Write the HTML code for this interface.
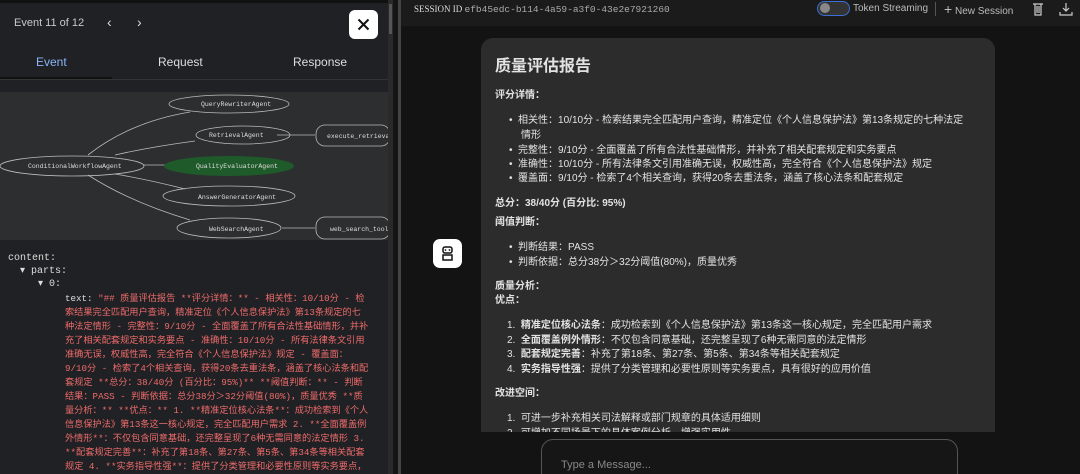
<!DOCTYPE html><html><head><meta charset="utf-8"><style>
*{margin:0;padding:0;box-sizing:border-box}
html{width:1080px;height:474px;overflow:hidden}
body{width:1080px;height:474px;overflow:hidden;background:#131313;font-family:"Liberation Sans","Noto Sans CJK SC",sans-serif;position:relative;color:#e3e3e3}
.abs{position:absolute}
#left{left:0;top:0;width:393px;height:474px;background:#202124;overflow:hidden}
.mono{font-family:"Liberation Mono","Noto Sans CJK SC",monospace}
.card{left:481px;top:38px;width:514px;height:394px;background:#2c2c2c;border-radius:12px 12px 0 0;overflow:hidden;font-size:10px;color:#e3e3e3}
.card .l{position:absolute;white-space:nowrap}
.b{font-weight:bold}
.jt{font-size:9.2px;color:#ee6b6b;line-height:14px;white-space:nowrap}
</style></head><body>
<div id="left" class="abs">
 <div class="abs" style="left:0;top:0;width:393px;height:3px;background:#111"></div>
 <div class="abs" style="left:14px;top:17px;font-size:11px;color:#c8c8c8">Event 11 of 12</div>
 <div class="abs" style="left:107px;top:14px;font-size:14px;color:#ddd">&#8249;</div>
 <div class="abs" style="left:137px;top:14px;font-size:14px;color:#ddd">&#8250;</div>
 <div class="abs" style="left:349px;top:10px;width:29px;height:29px;background:#fff;border-radius:6px"><svg width="29" height="29"><path d="M9.5 9.5L19.5 19.5M19.5 9.5L9.5 19.5" stroke="#111" stroke-width="2"/></svg></div>
 <div class="abs" style="left:36px;top:55px;font-size:12px;color:#8ab4f8">Event</div>
 <div class="abs" style="left:158px;top:55px;font-size:12px;color:#ddd">Request</div>
 <div class="abs" style="left:293px;top:55px;font-size:12px;color:#ddd">Response</div>
 <div class="abs" style="left:0;top:77px;width:112px;height:2px;background:#111"></div>
 <div class="abs" style="left:0;top:79px;width:393px;height:1px;background:#333"></div>
 <div class="abs" style="left:0;top:92px;width:393px;height:148px;background:#2d2e30"></div>
 <svg class="abs" style="left:0;top:92px" width="393" height="148">
  <g stroke="#bbb" stroke-width="0.8" fill="none">
   <path d="M88 63Q130 30 190 20M115 63Q150 55 195 49M143 73L165 73M115 82Q150 88 185 97M88 83Q130 110 190 128M277 43L315 43M282 136L315 136"/>
   <ellipse cx="229" cy="12" rx="60" ry="9"/><ellipse cx="243" cy="43" rx="47" ry="9"/><ellipse cx="72" cy="74" rx="72" ry="10"/>
   <ellipse cx="229" cy="104" rx="66" ry="10"/><ellipse cx="229" cy="136" rx="52" ry="10"/>
   <rect x="316" y="33" width="74" height="21" rx="9"/><rect x="316" y="125" width="74" height="22" rx="9"/>
  </g>
  <ellipse cx="229" cy="74" rx="65" ry="10" fill="#1f5a2a"/>
  <g font-family="Liberation Mono" font-size="6.5" fill="#ddd">
   <text x="201" y="14">QueryRewriterAgent</text><text x="209" y="45">RetrievalAgent</text>
   <text x="28" y="76">ConditionalWorkflowAgent</text><text x="196" y="76">QualityEvaluatorAgent</text>
   <text x="198" y="107">AnswerGeneratorAgent</text><text x="209" y="139">WebSearchAgent</text>
   <text x="327" y="46">execute_retrieval</text><text x="330" y="139">web_search_tool</text>
  </g>
 </svg>
 <div class="abs mono" style="left:8px;top:252px;font-size:10px;color:#ddd;line-height:13px">content:<br>&nbsp;&nbsp;▾ parts:<br>&nbsp;&nbsp;&nbsp;&nbsp;&nbsp;▾ 0:</div>
 <div class="abs mono jt" style="left:65px;top:292px"><span style="color:#ddd">text: </span>"## 质量评估报告 **评分详情：** - 相关性：10/10分 - 检<br>索结果完全匹配用户查询，精准定位《个人信息保护法》第13条规定的七<br>种法定情形 - 完整性：9/10分 - 全面覆盖了所有合法性基础情形，并补<br>充了相关配套规定和实务要点 - 准确性：10/10分 - 所有法律条文引用<br>准确无误，权威性高，完全符合《个人信息保护法》规定 - 覆盖面：<br>9/10分 - 检索了4个相关查询，获得20条去重法条，涵盖了核心法条和配<br>套规定 **总分：38/40分 (百分比：95%)** **阈值判断：** - 判断<br>结果：PASS - 判断依据：总分38分＞32分阈值(80%)，质量优秀 **质<br>量分析：** **优点：** 1. **精准定位核心法条**：成功检索到《个人<br>信息保护法》第13条这一核心规定，完全匹配用户需求 2. **全面覆盖例<br>外情形**：不仅包含同意基础，还完整呈现了6种无需同意的法定情形 3.<br>**配套规定完善**：补充了第18条、第27条、第5条、第34条等相关配套<br>规定 4. **实务指导性强**：提供了分类管理和必要性原则等实务要点，<br>具有很好的应用价值 **改进空间：** 1. 可进一步补充相关司法解释或</div>
 <div class="abs" style="left:388px;top:0;width:5px;height:474px;background:#2a2a2a"></div>
 <div class="abs" style="left:389px;top:4px;width:3px;height:30px;background:#555"></div>
</div>
<div class="abs" style="left:393px;top:0;width:5px;height:474px;background:#141414"></div>
<div class="abs" style="left:398px;top:0;width:3px;height:474px;background:#444"></div>
<div class="abs" style="left:401px;top:0;width:679px;height:26px;background:#1b1b1b"></div>
<div class="abs" style="left:414px;top:4px;font-size:9px;color:#ddd;font-family:'Liberation Serif',serif">SESSION ID <span class="mono" style="color:#aaa;font-size:9.5px">efb45edc-b114-4a59-a3f0-43e2e7921260</span></div>
<div class="abs" style="left:817px;top:1px;width:33px;height:15px;border:1.5px solid #3b6fd6;border-radius:8px;background:#333"><div style="position:absolute;left:2px;top:1px;width:10px;height:10px;border-radius:50%;background:#888"></div></div>
<div class="abs" style="left:853px;top:3px;font-size:10px;color:#bbb">Token Streaming</div>
<div class="abs" style="left:935px;top:2px;width:1px;height:14px;background:#555"></div>
<div class="abs" style="left:944px;top:1px;font-size:10px;color:#bbb"><span style="font-size:14px">+</span> New Session</div>
<svg class="abs" style="left:1032px;top:2px" width="12" height="14"><path d="M1 2H11M3 2V13H9V2M5 4V11M7 4V11" stroke="#ccc" fill="none" stroke-width="1.2"/></svg>
<svg class="abs" style="left:1059px;top:2px" width="14" height="14"><path d="M7 1V9M4 6L7 9L10 6M1 10V13H13V10" stroke="#ccc" fill="none" stroke-width="1.2"/></svg>
<div class="abs card">
 <div class="l b" style="left:14px;top:14px;font-size:16px">质量评估报告</div>
 <div class="l b" style="left:14px;top:48px">评分详情：</div>
 <div class="l" style="left:28px;top:73px">•&nbsp; 相关性：10/10分 - 检索结果完全匹配用户查询，精准定位《个人信息保护法》第13条规定的七种法定</div>
 <div class="l" style="left:40px;top:88px">情形</div>
 <div class="l" style="left:28px;top:103px">•&nbsp; 完整性：9/10分 - 全面覆盖了所有合法性基础情形，并补充了相关配套规定和实务要点</div>
 <div class="l" style="left:28px;top:117px">•&nbsp; 准确性：10/10分 - 所有法律条文引用准确无误，权威性高，完全符合《个人信息保护法》规定</div>
 <div class="l" style="left:28px;top:131px">•&nbsp; 覆盖面：9/10分 - 检索了4个相关查询，获得20条去重法条，涵盖了核心法条和配套规定</div>
 <div class="l b" style="left:14px;top:156px">总分：38/40分 (百分比: 95%)</div>
 <div class="l b" style="left:14px;top:175px">阈值判断：</div>
 <div class="l" style="left:28px;top:200px">•&nbsp; 判断结果：PASS</div>
 <div class="l" style="left:28px;top:215px">•&nbsp; 判断依据：总分38分＞32分阈值(80%)，质量优秀</div>
 <div class="l b" style="left:14px;top:239px">质量分析：</div>
 <div class="l b" style="left:14px;top:253px">优点：</div>
 <div class="l" style="left:26px;top:278px">1.&nbsp; <b>精准定位核心法条</b>：成功检索到《个人信息保护法》第13条这一核心规定，完全匹配用户需求</div>
 <div class="l" style="left:26px;top:293px">2.&nbsp; <b>全面覆盖例外情形</b>：不仅包含同意基础，还完整呈现了6种无需同意的法定情形</div>
 <div class="l" style="left:26px;top:307px">3.&nbsp; <b>配套规定完善</b>：补充了第18条、第27条、第5条、第34条等相关配套规定</div>
 <div class="l" style="left:26px;top:322px">4.&nbsp; <b>实务指导性强</b>：提供了分类管理和必要性原则等实务要点，具有很好的应用价值</div>
 <div class="l b" style="left:14px;top:346px">改进空间：</div>
 <div class="l" style="left:26px;top:371px">1.&nbsp; 可进一步补充相关司法解释或部门规章的具体适用细则</div>
 <div class="l" style="left:26px;top:386px">2.&nbsp; 可增加不同场景下的具体案例分析，增强实用性</div>
</div>
<div class="abs" style="left:433px;top:239px;width:29px;height:29px;background:#fff;border-radius:7px"><svg width="29" height="29"><rect x="10" y="8" width="9" height="6" rx="2" fill="none" stroke="#111" stroke-width="1.5"/><circle cx="12.5" cy="11" r="0.9" fill="#111"/><circle cx="16.5" cy="11" r="0.9" fill="#111"/><rect x="10" y="16" width="9" height="5" fill="none" stroke="#111" stroke-width="1.5"/></svg></div>
<div class="abs" style="left:541px;top:439px;width:417px;height:50px;border:1px solid #555;border-radius:12px;background:#161616"></div>
<div class="abs" style="left:561px;top:459px;font-size:11px;color:#888">Type a Message...</div>
</body></html>
